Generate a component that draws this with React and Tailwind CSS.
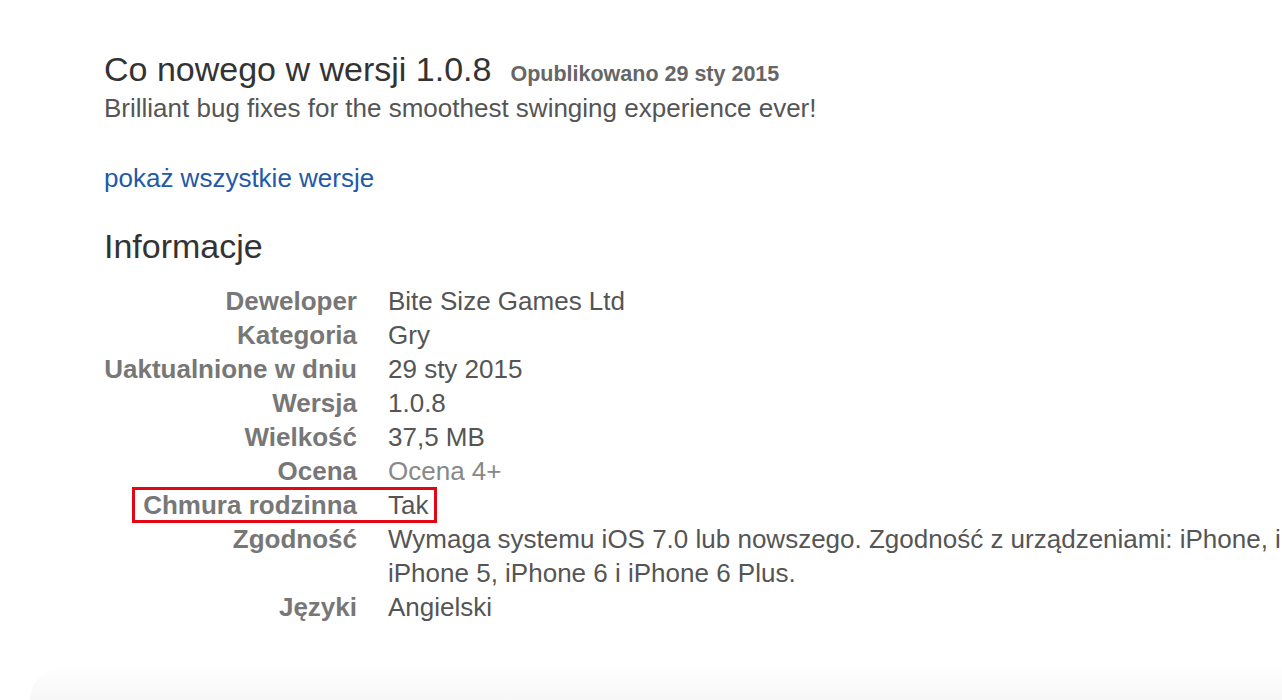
import React from 'react';

const rows = [
  { label: 'Deweloper', value: 'Bite Size Games Ltd' },
  { label: 'Kategoria', value: 'Gry' },
  { label: 'Uaktualnione w dniu', value: '29 sty 2015' },
  { label: 'Wersja', value: '1.0.8' },
  { label: 'Wielkość', value: '37,5 MB' },
  { label: 'Ocena', value: 'Ocena 4+', muted: true },
  { label: 'Chmura rodzinna', value: 'Tak', highlight: true },
];

export default function App() {
  return (
    <div className="relative h-[700px] w-[1282px] overflow-hidden bg-white font-['Liberation_Sans',Arial,sans-serif]">
      <div className="pl-[104px] pt-[50px]">
        <div className="flex items-baseline gap-[19px]">
          <h1 className="text-[34px] leading-[38px] text-[#333]">Co nowego w wersji 1.0.8</h1>
          <span className="text-[21.5px] font-bold text-[#666]">Opublikowano 29 sty 2015</span>
        </div>
        <p className="mt-[1px] text-[26px] leading-[34px] text-[#555]">
          Brilliant bug fixes for the smoothest swinging experience ever!
        </p>

        <a href="#" className="mt-[36px] block text-[26px] leading-[34px] text-[#2359a8]">
          pokaż wszystkie wersje
        </a>

        <h2 className="mt-[32px] text-[34px] leading-[38px] text-[#333]">Informacje</h2>

        <div className="mt-[19px] text-[26px] leading-[34px]">
          {rows.map((row) => (
            <div key={row.label} className="relative flex">
              <div className="w-[253px] shrink-0 text-right font-bold text-[#777]">{row.label}</div>
              <div className={`ml-[31px] ${row.muted ? 'text-[#888]' : 'text-[#555]'}`}>{row.value}</div>
              {row.highlight && (
                <div className="absolute left-[28px] top-[-1px] h-[36px] w-[305px] border-[3px] border-[#e30613]" />
              )}
            </div>
          ))}
          <div className="flex">
            <div className="w-[253px] shrink-0 text-right font-bold text-[#777]">Zgodność</div>
            <div className="ml-[31px] shrink-0 whitespace-nowrap text-[#555]">
              Wymaga systemu iOS 7.0 lub nowszego. Zgodność z urządzeniami: iPhone, iPad i iPod touch.
              <br />
              iPhone 5, iPhone 6 i iPhone 6 Plus.
            </div>
          </div>
          <div className="flex">
            <div className="w-[253px] shrink-0 text-right font-bold text-[#777]">Języki</div>
            <div className="ml-[31px] text-[#555]">Angielski</div>
          </div>
        </div>
      </div>

      <div className="absolute bottom-0 left-[30px] right-[-40px] h-[32px] rounded-tl-[80px] bg-gradient-to-b from-[#fefefe] to-[#f7f7f7]" />
    </div>
  );
}
